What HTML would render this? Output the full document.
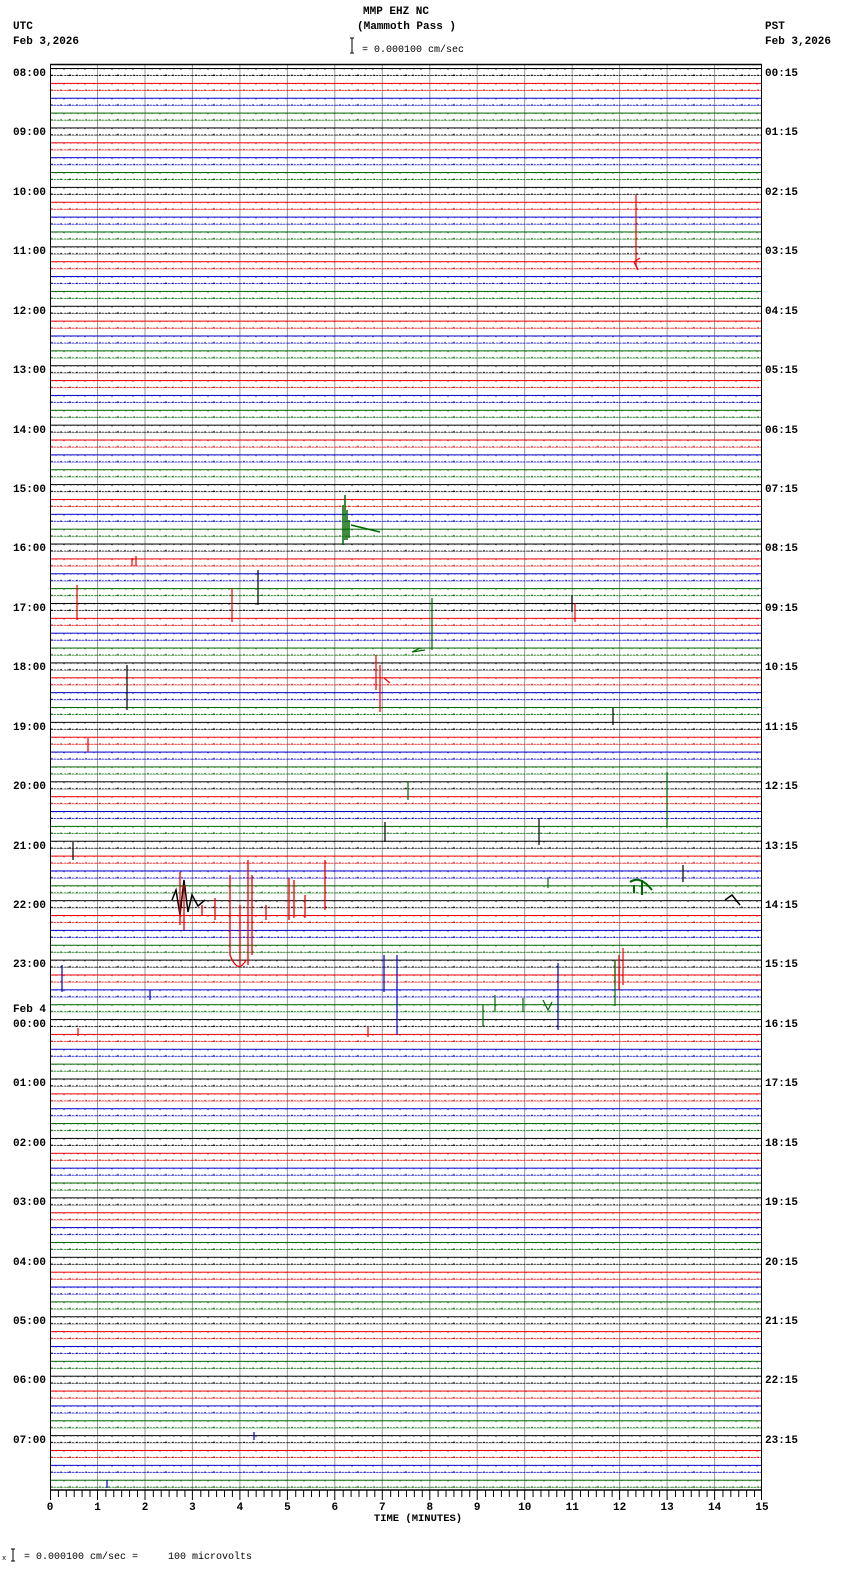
<!DOCTYPE html>
<html><head><meta charset="utf-8"><style>
html,body{margin:0;padding:0;background:#fff;overflow:hidden;width:850px;height:1584px}
svg{display:block}
text{font-family:"Liberation Mono",monospace;font-size:11px;font-weight:bold;fill:#000}
</style></head><body>
<svg width="850" height="1584" viewBox="0 0 850 1584" xmlns="http://www.w3.org/2000/svg">
<defs>
<path id="nz" d="M0 4L1 3.5L2 4.6L3 4L4 3L5 4.8L6 4L7 3.4L8 5L9 4L10 3.5L11 4L12 4.6L13 3L14 4L15 4L16 5.2L17 3.5L18 4L19 4.6L20 3.4L21 4L22 2.8L23 4.8L24 4L25 3.5L26 4.6L27 4L28 4L29 3L30 5L31 4L32 3.5L33 4.6L34 4L35 3.5L36 4L37 5.2L38 3L39 4L40 4.6L41 3.5L42 4L43 4.6L44 3.5L45 4L46 5L47 3.5L48 4" fill="none" stroke-width="1"/>
<pattern id="pk" patternUnits="userSpaceOnUse" width="48" height="8"><path d="M0 4.5H48" stroke="#000"/><use href="#nz" stroke="#000"/></pattern>
<pattern id="pr" patternUnits="userSpaceOnUse" width="48" height="8"><path d="M0 4.5H48" stroke="#e00"/><use href="#nz" stroke="#e00"/></pattern>
<pattern id="pb" patternUnits="userSpaceOnUse" width="48" height="8"><path d="M0 4.5H48" stroke="#00c"/><use href="#nz" stroke="#00c"/></pattern>
<pattern id="pg" patternUnits="userSpaceOnUse" width="48" height="8"><path d="M0 4.5H48" stroke="#060"/><use href="#nz" stroke="#060"/></pattern>
<g id="H">
<g transform="translate(0,72)"><rect x="51" y="-4" width="710" height="8" fill="url(#pk)"/></g>
<g transform="translate(0,86.86)"><rect x="51" y="-4" width="710" height="8" fill="url(#pr)"/></g>
<g transform="translate(0,101.72)"><rect x="51" y="-4" width="710" height="8" fill="url(#pb)"/></g>
<g transform="translate(0,116.58)"><rect x="51" y="-4" width="710" height="8" fill="url(#pg)"/></g>
</g>
</defs>
<text x="363" y="14">MMP EHZ NC</text>
<text x="357" y="29">(Mammoth Pass )</text>
<text x="13" y="29">UTC</text>
<text x="13" y="44">Feb 3,2026</text>
<text x="765" y="29">PST</text>
<text x="765" y="44">Feb 3,2026</text>
<path d="M350 38H354M352 38V53M350 53H354" stroke="#000"/>
<text x="362" y="52" style="font-size:10px;font-weight:normal">= 0.000100 cm/sec</text>
<path d="M97.5 64V1490M145 64V1490M192.4 64V1490M239.9 64V1490M287.4 64V1490M334.8 64V1490M382.3 64V1490M429.8 64V1490M477.2 64V1490M524.7 64V1490M572.2 64V1490M619.6 64V1490M667.1 64V1490M714.6 64V1490" stroke="#999"/>
<path d="M50.5 64V1490M761.5 64V1490" stroke="#000"/>
<path d="M50 64.5H762" stroke="#000" stroke-width="1.5"/>
<use href="#H" y="0"/><use href="#H" y="59.44"/>
<use href="#H" y="118.88"/><use href="#H" y="178.32"/><use href="#H" y="237.76"/><use href="#H" y="297.2"/>
<use href="#H" y="356.64"/><use href="#H" y="416.08"/><use href="#H" y="475.52"/><use href="#H" y="534.96"/>
<use href="#H" y="594.4"/><use href="#H" y="653.84"/><use href="#H" y="713.28"/><use href="#H" y="772.72"/>
<use href="#H" y="832.16"/><use href="#H" y="891.6"/><use href="#H" y="951.04"/><use href="#H" y="1010.48"/>
<use href="#H" y="1069.92"/><use href="#H" y="1129.36"/><use href="#H" y="1188.8"/><use href="#H" y="1248.24"/>
<use href="#H" y="1307.68"/><use href="#H" y="1367.12"/>
<g fill="none" stroke-width="1.2">
<path d="M636 195V265L638 270L634 262L640 258" stroke="#e00"/>
<path d="M345 495V540M343 505V545M347 510V540M349 520V538M351 525L380 532" stroke="#060" stroke-width="1.5"/>
<path d="M132 558V566M136 556V566" stroke="#e00"/>
<path d="M258 570V605M572 595V612" stroke="#000"/>
<path d="M77 585V620M232 588V622M575 603V622" stroke="#e00"/>
<path d="M432 598V650M420 648L412 652L425 650" stroke="#060"/>
<path d="M376 655V690M380 665V712M384 678L390 683" stroke="#e00"/>
<path d="M127 665V710M613 708V725" stroke="#000"/>
<path d="M88 738V752" stroke="#e00"/>
<path d="M667 772V828M408 782V800" stroke="#060"/>
<path d="M539 818V845M385 822V842" stroke="#000"/>
<path d="M73 842V860M683 865V882" stroke="#000"/>
<path d="M548 878V888" stroke="#060"/>
<path d="M630 882Q640 875 652 890M634 885V893M642 880V895" stroke="#060" stroke-width="2"/>
<path d="M172 900L176 890L180 915L184 880L188 912L192 895L198 906L205 900M725 900L732 895L740 905" stroke="#000" stroke-width="1.5"/>
<path d="M180 872V925M184 885V930M230 875V955Q238 975 246 960M248 860V965M252 875V955M266 905V920M289 878V920M294 880V918M305 895V918M325 860V910M215 898V920M202 905V915M240 905V965" stroke="#e00" stroke-width="1.3"/>
<path d="M62 965V992M384 955V992M397 955V1035M558 963V1030M150 990V1000" stroke="#00c"/>
<path d="M615 960V985M623 948V985M619 955V990" stroke="#e00"/>
<path d="M483 1005V1027M495 995V1012M523 998V1012M543 1000L548 1010L552 1002M615 960V1006" stroke="#060"/>
<path d="M368 1027V1037M78 1028V1036" stroke="#e00"/>
<path d="M254 1432V1440M107 1480V1488" stroke="#00c"/>
</g>
<path d="M50 1490H762" stroke="#000" stroke-width="1.5"/>
<g stroke="#000">
<path id="tk" d="M58.4 1490V1497M66.3 1490V1497M74.2 1490V1497M82.1 1490V1497M90 1490V1497"/>
<use href="#tk" x="47.47"/><use href="#tk" x="94.93"/><use href="#tk" x="142.4"/><use href="#tk" x="189.87"/><use href="#tk" x="237.33"/><use href="#tk" x="284.8"/><use href="#tk" x="332.27"/><use href="#tk" x="379.73"/><use href="#tk" x="427.2"/><use href="#tk" x="474.67"/><use href="#tk" x="522.13"/><use href="#tk" x="569.6"/><use href="#tk" x="617.07"/><use href="#tk" x="664.53"/>
<path d="M50.5 1490V1500M97.5 1490V1500M145 1490V1500M192.4 1490V1500M239.9 1490V1500M287.4 1490V1500M334.8 1490V1500M382.3 1490V1500M429.8 1490V1500M477.2 1490V1500M524.7 1490V1500M572.2 1490V1500M619.6 1490V1500M667.1 1490V1500M714.6 1490V1500M761.5 1490V1500"/>
</g>
<g text-anchor="middle">
<text x="50" y="1510">0</text><text x="97.5" y="1510">1</text><text x="145" y="1510">2</text><text x="192.4" y="1510">3</text><text x="239.9" y="1510">4</text><text x="287.4" y="1510">5</text><text x="334.8" y="1510">6</text><text x="382.3" y="1510">7</text><text x="429.8" y="1510">8</text><text x="477.2" y="1510">9</text><text x="524.7" y="1510">10</text><text x="572.2" y="1510">11</text><text x="619.6" y="1510">12</text><text x="667.1" y="1510">13</text><text x="714.6" y="1510">14</text><text x="762" y="1510">15</text>
<text x="418" y="1521" style="font-size:10.5px">TIME (MINUTES)</text>
</g>
<text x="2" y="1560" style="font-size:7px;font-weight:normal">x</text>
<path d="M11 1549H15M13 1549V1561M11 1561H15" stroke="#000"/>
<text x="24" y="1559" style="font-size:10px;font-weight:normal" xml:space="preserve">= 0.000100 cm/sec =     100 microvolts</text>
<g>
<text x="13" y="76">08:00</text><text x="13" y="135">09:00</text><text x="13" y="195">10:00</text><text x="13" y="254">11:00</text>
<text x="13" y="314">12:00</text><text x="13" y="373">13:00</text><text x="13" y="433">14:00</text><text x="13" y="492">15:00</text>
<text x="13" y="551">16:00</text><text x="13" y="611">17:00</text><text x="13" y="670">18:00</text><text x="13" y="730">19:00</text>
<text x="13" y="789">20:00</text><text x="13" y="849">21:00</text><text x="13" y="908">22:00</text><text x="13" y="967">23:00</text>
<text x="13" y="1012">Feb 4</text><text x="13" y="1027">00:00</text>
<text x="13" y="1086">01:00</text><text x="13" y="1146">02:00</text><text x="13" y="1205">03:00</text><text x="13" y="1265">04:00</text>
<text x="13" y="1324">05:00</text><text x="13" y="1383">06:00</text><text x="13" y="1443">07:00</text>
</g>
<g>
<text x="765" y="76">00:15</text><text x="765" y="135">01:15</text><text x="765" y="195">02:15</text><text x="765" y="254">03:15</text>
<text x="765" y="314">04:15</text><text x="765" y="373">05:15</text><text x="765" y="433">06:15</text><text x="765" y="492">07:15</text>
<text x="765" y="551">08:15</text><text x="765" y="611">09:15</text><text x="765" y="670">10:15</text><text x="765" y="730">11:15</text>
<text x="765" y="789">12:15</text><text x="765" y="849">13:15</text><text x="765" y="908">14:15</text><text x="765" y="967">15:15</text>
<text x="765" y="1027">16:15</text><text x="765" y="1086">17:15</text><text x="765" y="1146">18:15</text><text x="765" y="1205">19:15</text>
<text x="765" y="1265">20:15</text><text x="765" y="1324">21:15</text><text x="765" y="1383">22:15</text><text x="765" y="1443">23:15</text>
</g>
</svg>
</body></html>
